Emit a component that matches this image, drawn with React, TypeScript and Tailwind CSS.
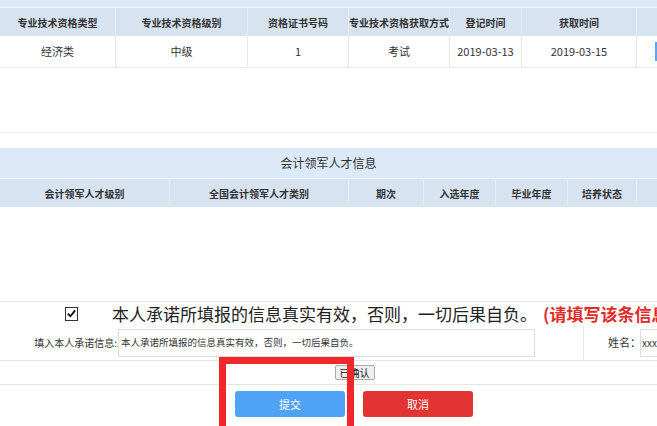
import React from 'react'

const font = { fontFamily: '"Noto Sans CJK SC", "Noto Sans", sans-serif' }

const qualCols = [
  { w: 'w-[116px]', head: '专业技术资格类型', val: '经济类' },
  { w: 'w-[132px]', head: '专业技术资格级别', val: '中级' },
  { w: 'w-[101px]', head: '资格证书号码', val: '1' },
  { w: 'w-[101px]', head: '专业技术资格获取方式', val: '考试' },
  { w: 'w-[72px]', head: '登记时间', val: '2019-03-13' },
  { w: 'w-[115px]', head: '获取时间', val: '2019-03-15' },
]

const leaderCols = [
  { w: 'w-[170px]', head: '会计领军人才级别' },
  { w: 'w-[179px]', head: '全国会计领军人才类别' },
  { w: 'w-[75px]', head: '期次' },
  { w: 'w-[72px]', head: '入选年度' },
  { w: 'w-[72px]', head: '毕业年度' },
  { w: 'w-[69px]', head: '培养状态' },
]

function HeadCell({ w, children }: { w: string; children?: React.ReactNode }) {
  return (
    <div className={`${w} shrink-0 h-full flex items-center justify-center overflow-hidden whitespace-nowrap border-r border-[#e6edf5] text-[10px] font-bold text-[#333]`}>
      {children}
    </div>
  )
}

export default function App() {
  return (
    <div className="relative w-[657px] h-[426px] overflow-hidden bg-white" style={font}>
      {/* top strip */}
      <div className="h-[8px] bg-[#dde9f8] border-b border-[#eef3f9]" />

      {/* qualification table */}
      <div className="flex h-[28px] bg-[#d7e3f1]">
        {qualCols.map((c) => (
          <HeadCell key={c.head} w={c.w}>{c.head}</HeadCell>
        ))}
        <div className="flex-1" />
      </div>
      <div className="flex h-[32px] border-b border-[#e8e8e8]">
        {qualCols.map((c) => (
          <div
            key={c.head}
            className={`${c.w} shrink-0 h-full flex items-center justify-center border-r border-[#e6e6e6] text-[11px] text-[#333]`}
          >
            {c.val}
          </div>
        ))}
        <div className="flex-1 flex items-center justify-end">
          <div className="w-[2px] h-[19px] bg-[#5aa6f2]" />
        </div>
      </div>
      <div className="h-[65px] border-b border-[#eeeeee]" />
      <div className="h-[15px]" />

      {/* leader talent table */}
      <div className="h-[30px] bg-[#dbe9f9] flex items-center justify-center text-[12px] text-[#333]">
        会计领军人才信息
      </div>
      <div className="flex h-[29px] bg-[#d7e3f1] border-t border-[#eef3f9]">
        {leaderCols.map((c) => (
          <HeadCell key={c.head} w={c.w}>{c.head}</HeadCell>
        ))}
        <div className="flex-1" />
      </div>
      <div className="h-[95px] border-b border-[#e6e6e6]" />

      {/* promise */}
      <div className="h-[23px] flex items-center">
        <div className="ml-[65px] w-[14px] h-[14px] border border-[#333] bg-white flex items-center justify-center">
          <svg width="11" height="11" viewBox="0 0 12 12">
            <path d="M2 6.2 L4.8 9 L10 2.6" fill="none" stroke="#111" strokeWidth="2" />
          </svg>
        </div>
        <span className="ml-[34px] text-[17px] text-[#222] whitespace-nowrap">
          本人承诺所填报的信息真实有效，否则，一切后果自负。
          <span className="ml-[6px] text-[#e32b2b] font-bold">(请填写该条信息)</span>
        </span>
      </div>
      <div className="h-[36px] flex items-center border-b border-[#e6e6e6]">
        <div className="w-[117px] shrink-0 text-right text-[10px] text-[#333] whitespace-nowrap">填入本人承诺信息:</div>
        <div className="ml-[1px] w-[417px] shrink-0 h-[28px] border border-[#dcdcdc] flex items-center px-[2px] text-[9.5px] text-[#333] whitespace-nowrap overflow-hidden">
          本人承诺所填报的信息真实有效，否则，一切后果自负。
        </div>
        <div className="ml-[48px] shrink-0 h-full border-l border-[#e6e6e6]" />
        <div className="ml-[24px] shrink-0 text-[11px] text-[#333] whitespace-nowrap">姓名：</div>
        <div className="ml-[-1px] w-[60px] shrink-0 h-[28px] border border-[#dcdcdc] flex items-center px-[1px] text-[10px] text-[#333]">xxx</div>
      </div>
      <div className="h-[24px] flex items-center justify-center border-b border-[#e6e6e6]">
        <button className="ml-[52px] h-[15px] px-[4px] bg-[#efefef] border border-[#aaa] rounded-[2px] text-[10px] leading-none text-[#222]">
          已确认
        </button>
      </div>
      <div className="flex pt-[6px] pl-[235px] gap-[18px]">
        <button className="w-[110px] h-[26px] rounded-[3px] bg-[#4fa2f5] text-white text-[11px]">提交</button>
        <button className="w-[110px] h-[26px] rounded-[3px] bg-[#e33333] text-white text-[11px]">取消</button>
      </div>

      {/* highlight box */}
      <div className="absolute left-[219px] top-[357px] w-[135px] h-[80px] border-[7px] border-[#f0282d]" />
    </div>
  )
}
